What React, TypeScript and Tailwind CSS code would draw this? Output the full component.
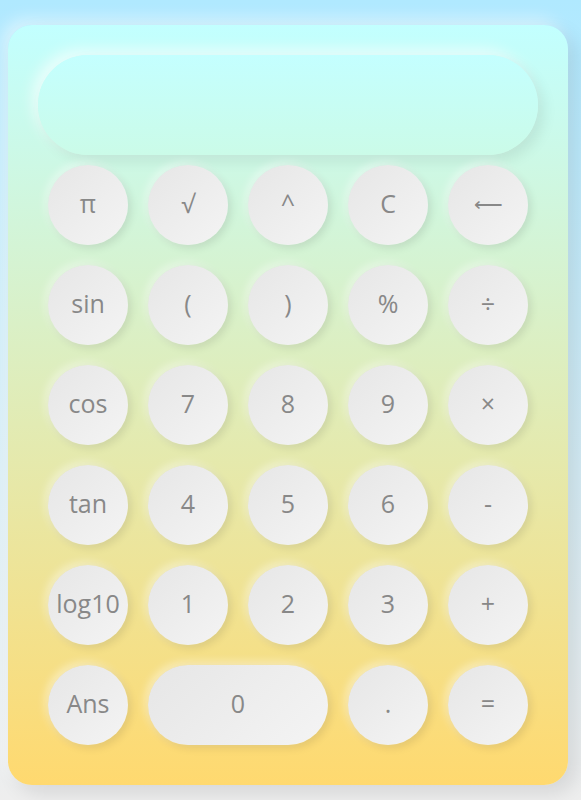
import React from "react";

const rows: string[][] = [
  ["π", "√", "^", "C", "⟵"],
  ["sin", "(", ")", "%", "÷"],
  ["cos", "7", "8", "9", "×"],
  ["tan", "4", "5", "6", "-"],
  ["log10", "1", "2", "3", "+"],
];

function Key({ label, wide = false }: { label: string; wide?: boolean }) {
  const small = label === "⟵";
  return (
    <button
      className={`m-[10px] h-[80px] ${wide ? "w-[180px]" : "w-[80px]"} ${small ? "text-[20px]" : "text-[25px]"} shrink-0 pb-[3px] rounded-full bg-[linear-gradient(135deg,#e6e6e6,#f4f4f4)] text-[#888888] leading-none flex items-center justify-center shadow-[3px_3px_8px_rgba(0,0,0,0.10),-3px_-3px_8px_rgba(255,255,255,0.45)]`}
      style={{ fontFamily: '"Open Sans", "Noto Sans", sans-serif' }}
    >
      {label}
    </button>
  );
}

export default function App() {
  return (
    <div className="min-h-[800px] w-full bg-[linear-gradient(to_bottom,#b0e9ff,#eeeeee)] pt-[25px] pl-[8px]">
      <div className="w-[560px] h-[760px] rounded-[24px] bg-[linear-gradient(to_bottom,#c2ffff,#ffd96f)] p-[30px] shadow-[8px_8px_20px_rgba(0,0,0,0.10),-6px_-6px_16px_rgba(255,255,255,0.5)] flex flex-col">
        <div className="h-[100px] shrink-0 w-[500px] rounded-full bg-[linear-gradient(to_bottom,#c4ffff,#cbfbe8)] shadow-[6px_6px_14px_rgba(0,0,0,0.08),-6px_-6px_14px_rgba(255,255,255,0.6)]" />
        <div className="flex flex-col">
          {rows.map((r, i) => (
            <div key={i} className="flex">
              {r.map((k) => (
                <Key key={k} label={k} />
              ))}
            </div>
          ))}
          <div className="flex">
            <Key label="Ans" />
            <Key label="0" wide />
            <Key label="." />
            <Key label="=" />
          </div>
        </div>
      </div>
    </div>
  );
}
